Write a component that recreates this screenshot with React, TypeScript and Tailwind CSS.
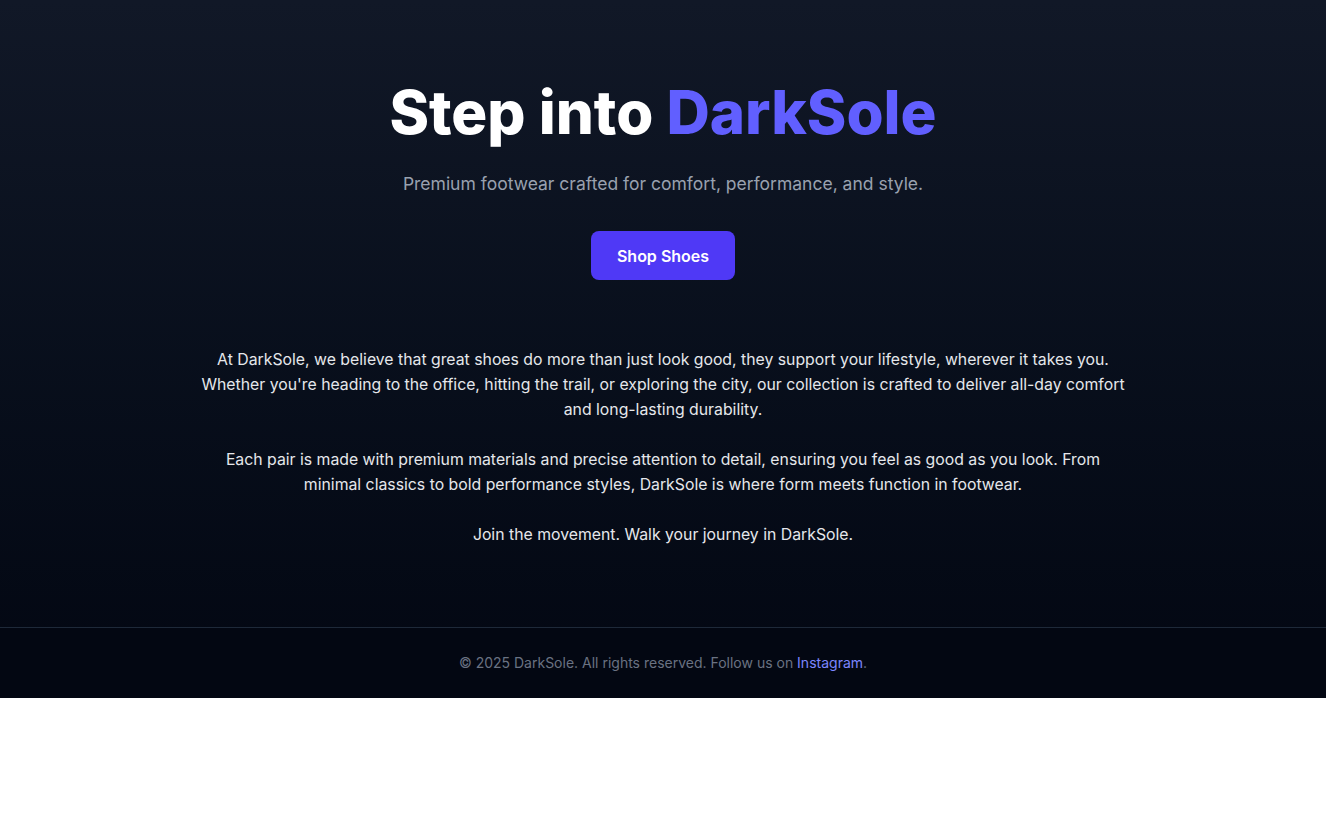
const App = () => {
  return (
    <div className="w-full bg-gradient-to-b from-[#111827] to-[#030712] font-['Inter',sans-serif] text-white">
      {/* Hero */}
      <section className="flex flex-col items-center px-6 pt-[82px] text-center">
        <h1 className="text-6xl leading-none font-extrabold">
          Step into <span className="text-indigo-500">DarkSole</span>
        </h1>
        <p className="mt-7 text-[17.5px] leading-7 text-gray-400">
          Premium footwear crafted for comfort, performance, and style.
        </p>
        <button className="mt-[33px] rounded-lg bg-indigo-600 px-[26px] py-[12.5px] font-semibold text-white hover:bg-indigo-500">
          Shop Shoes
        </button>
      </section>

      {/* About */}
      <section className="mx-auto mt-[67px] flex max-w-[929px] flex-col gap-[25px] pb-20 text-center text-[15.8px] leading-[25px] text-gray-200">
        <p>
          At DarkSole, we believe that great shoes do more than just look good, they support your lifestyle, wherever it
          takes you. Whether you're heading to the office, hitting the trail, or exploring the city, our collection is
          crafted to deliver all-day comfort and long-lasting durability.
        </p>
        <p>
          Each pair is made with premium materials and precise attention to detail, ensuring you feel as good as you look.
          From minimal classics to bold performance styles, DarkSole is where form meets function in footwear.
        </p>
        <p>Join the movement. Walk your journey in DarkSole.</p>
      </section>

      {/* Footer */}
      <footer className="border-t border-gray-800 bg-[#030712] py-[25px] text-center text-sm text-gray-500">
        © 2025 DarkSole. All rights reserved. Follow us on{' '}
        <a href="#" className="text-indigo-400 hover:underline">
          Instagram
        </a>
        .
      </footer>
    </div>
  );
};

export default App;
